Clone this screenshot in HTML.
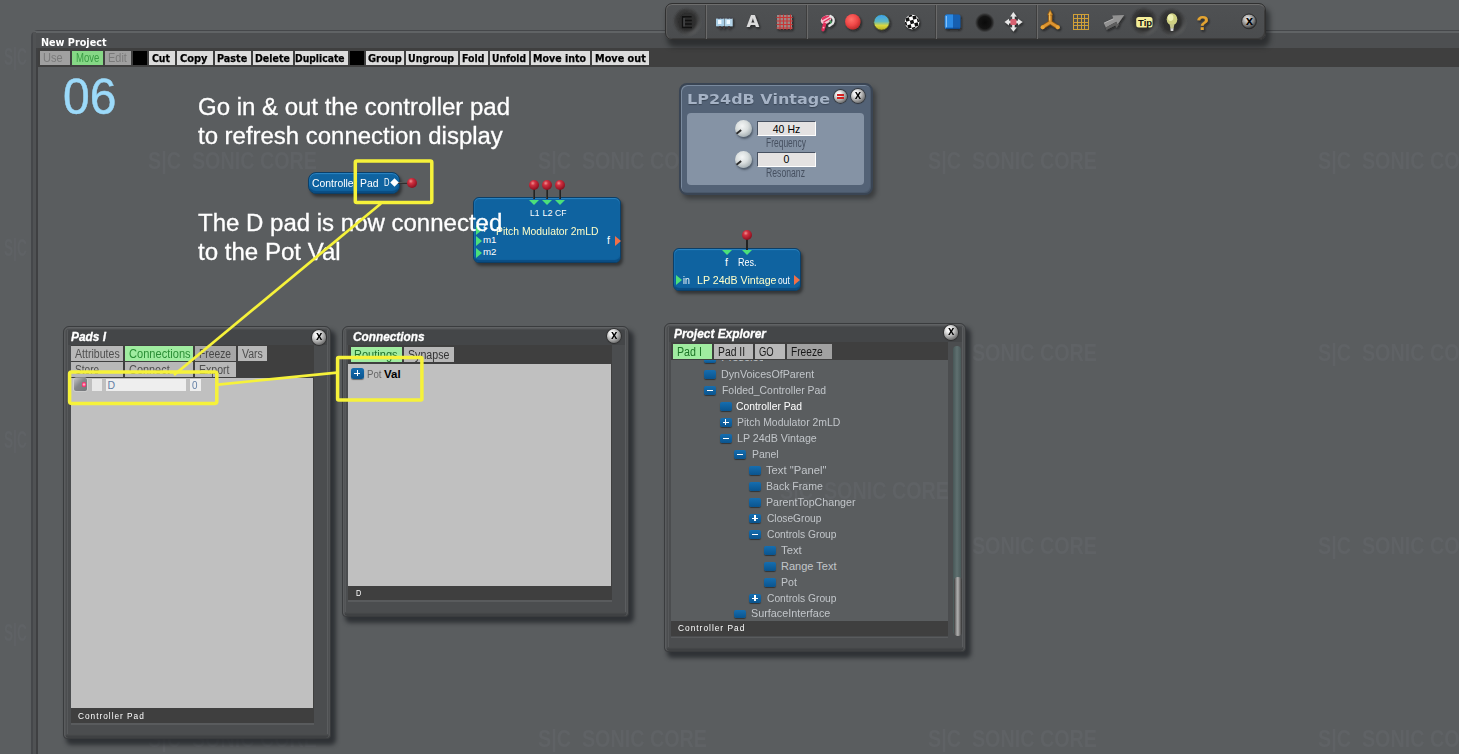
<!DOCTYPE html><html><head><meta charset="utf-8"><title>New Project</title><style>
*{margin:0;padding:0;box-sizing:border-box}
html,body{width:1459px;height:754px;overflow:hidden;background:#5b5e60;font-family:"Liberation Sans",sans-serif}
.a{position:absolute}
.t{position:absolute;white-space:nowrap;transform-origin:0 0;line-height:1}
.wm{position:absolute;white-space:nowrap;font:bold 23.5px/1 "Liberation Sans",sans-serif;color:#5f6265;transform-origin:0 0;transform:scaleX(.84)}
.wm s{text-decoration:none;display:inline-block;width:13px}
.btn{position:absolute;top:51px;height:14px;background:#dcdcdc}
.win{position:absolute;background:#4b4d4f;border:1.5px solid #3a3c3e;border-radius:6px 6px 4px 4px;box-shadow:inset 0 1px 0 #606264,inset 0 2px 0 #57595b,inset 1.5px 0 0 #5a5c5e,inset -1.5px 0 0 #535557,inset 0 -2.5px 1px #3f4143,4px 5px 4px 1px rgba(34,36,40,.75)}
.cb{position:absolute;width:14.4px;height:14.4px;border-radius:50%;background:radial-gradient(circle at 36% 32%,#fff 0,#ececec 20%,#b4b4b4 46%,#7c7c7c 70%,#3c3c3c 100%);box-shadow:0 0 .8px .7px #262626}
.cb b{position:absolute;left:0;top:0;width:14.4px;text-align:center;font:bold 9px/14.6px "DejaVu Sans",sans-serif;color:#000;transform:scaleX(.92)}
.tab{position:absolute;background:#b8b8b8;height:15px}
.tab.on{background:#a0eca0}
.mod{position:absolute;background:#0f63a0;border:1px solid #0b3f68;border-radius:6px;box-shadow:inset 0 1px 1px #2d86c4,inset 0 -2px 1px #0a4c82,inset 1px 0 0 #1670b0,2px 3px 3px rgba(20,22,24,.55)}
.ball{position:absolute;width:10px;height:10px;border-radius:50%;background:radial-gradient(circle at 38% 32%,#f09090 0,#d03040 25%,#a01828 60%,#58040c 100%)}
.ti{position:absolute;width:12px;height:8.8px;border-radius:2px;background:linear-gradient(#166eb0,#0a548e);box-shadow:0 1px 1px rgba(0,0,0,.45)}
.ti u,.ti s{position:absolute;background:#fff;left:3px;top:3.6px;width:6px;height:1.5px}.ti s{left:5.25px;top:1.4px;width:1.5px;height:6px}
.tu{position:absolute;width:0;height:0;border-left:5px solid transparent;border-right:5px solid transparent;border-top:5px solid #4be07a}
.tl{position:absolute;width:0;height:0;border-top:5px solid transparent;border-bottom:5px solid transparent;border-left:6px solid #4be07a}
</style></head><body>
<div class="wm" style="left:4px;top:46px;transform:scaleX(.58)">S|C<s></s>SONIC CORE</div>
<div class="wm" style="left:4px;top:237px;transform:scaleX(.58)">S|C<s></s>SONIC CORE</div>
<div class="wm" style="left:4px;top:429px;transform:scaleX(.58)">S|C<s></s>SONIC CORE</div>
<div class="wm" style="left:4px;top:622px;transform:scaleX(.58)">S|C<s></s>SONIC CORE</div>
<div class="a" style="left:31px;top:30px;width:1440px;height:740px;background:#5a5d5f;border-top-left-radius:7px;overflow:hidden"><div class="a" style="left:0;top:0;width:1440px;height:1px;background:#45474a"></div><div class="a" style="left:0;top:1px;width:1440px;height:2px;background:#606365"></div><div class="a" style="left:0;top:3px;width:1440px;height:15px;background:#4d4f51"></div><div class="a" style="left:0;top:18px;width:1440px;height:19px;background:#3f3f3f"></div><div class="a" style="left:0;top:0;width:2px;height:740px;background:#45474a"></div><div class="a" style="left:2px;top:2px;width:3px;height:740px;background:#505254"></div><div class="a" style="left:5px;top:18px;width:2px;height:740px;background:#3f4042"></div>
<div class="wm" style="left:116.80000000000001px;top:119.69999999999999px">S|C<s></s>SONIC CORE</div>
<div class="wm" style="left:506.79999999999995px;top:119.69999999999999px">S|C<s></s>SONIC CORE</div>
<div class="wm" style="left:896.8px;top:119.69999999999999px">S|C<s></s>SONIC CORE</div>
<div class="wm" style="left:1286.8px;top:119.69999999999999px">S|C<s></s>SONIC CORE</div>
<div class="wm" style="left:896.8px;top:312.2px">S|C<s></s>SONIC CORE</div>
<div class="wm" style="left:1286.8px;top:312.2px">S|C<s></s>SONIC CORE</div>
<div class="wm" style="left:896.8px;top:505px">S|C<s></s>SONIC CORE</div>
<div class="wm" style="left:1286.8px;top:505px">S|C<s></s>SONIC CORE</div>
<div class="wm" style="left:506.79999999999995px;top:697.9px">S|C<s></s>SONIC CORE</div>
<div class="wm" style="left:896.8px;top:697.9px">S|C<s></s>SONIC CORE</div>
<div class="wm" style="left:1286.8px;top:697.9px">S|C<s></s>SONIC CORE</div>
<div class="wm" style="left:116.80000000000001px;top:697.9px">S|C<s></s>SONIC CORE</div>
</div>
<div class="t" style="left:40.5px;top:36.69px;font:bold 11px 'DejaVu Sans',sans-serif;line-height:1;color:#fff;transform:scaleX(0.8766);">New Project</div>
<div class="btn" style="left:40px;width:30.0px;background:#a0a0a0;"></div>
<div class="t" style="left:43.4px;top:51.92px;font:12.5px 'Liberation Sans',sans-serif;line-height:1;color:#7a7a7a;transform:scaleX(0.8815);">Use</div>
<div class="btn" style="left:72px;width:31.0px;background:#86d886;"></div>
<div class="t" style="left:75.6px;top:51.92px;font:12.5px 'Liberation Sans',sans-serif;line-height:1;color:#3a9c44;transform:scaleX(0.7653);">Move</div>
<div class="btn" style="left:105px;width:26.0px;background:#a0a0a0;"></div>
<div class="t" style="left:108.4px;top:51.92px;font:12.5px 'Liberation Sans',sans-serif;line-height:1;color:#7a7a7a;transform:scaleX(0.8772);">Edit</div>
<div class="btn" style="left:133px;width:14.0px;background:#000;"></div>
<div class="btn" style="left:149px;width:25.8px;"></div>
<div class="t" style="left:151.7px;top:52.69px;font:bold 11px 'DejaVu Sans',sans-serif;line-height:1;color:#000;transform:scaleX(0.8502);-webkit-text-stroke:.25px #000;">Cut</div>
<div class="btn" style="left:177px;width:35.7px;"></div>
<div class="t" style="left:179.7px;top:52.69px;font:bold 11px 'DejaVu Sans',sans-serif;line-height:1;color:#000;transform:scaleX(0.8961);-webkit-text-stroke:.25px #000;">Copy</div>
<div class="btn" style="left:214.9px;width:36.0px;"></div>
<div class="t" style="left:216.8px;top:52.69px;font:bold 11px 'DejaVu Sans',sans-serif;line-height:1;color:#000;transform:scaleX(0.8762);-webkit-text-stroke:.25px #000;">Paste</div>
<div class="btn" style="left:252.7px;width:40.2px;"></div>
<div class="t" style="left:254.6px;top:52.69px;font:bold 11px 'DejaVu Sans',sans-serif;line-height:1;color:#000;transform:scaleX(0.8583);-webkit-text-stroke:.25px #000;">Delete</div>
<div class="btn" style="left:294.7px;width:53.3px;"></div>
<div class="t" style="left:295.4px;top:52.69px;font:bold 11px 'DejaVu Sans',sans-serif;line-height:1;color:#000;transform:scaleX(0.8400);-webkit-text-stroke:.25px #000;">Duplicate</div>
<div class="btn" style="left:350.3px;width:13.9px;background:#000;"></div>
<div class="btn" style="left:366px;width:37.6px;"></div>
<div class="t" style="left:367.5px;top:52.69px;font:bold 11px 'DejaVu Sans',sans-serif;line-height:1;color:#000;transform:scaleX(0.8961);-webkit-text-stroke:.25px #000;">Group</div>
<div class="btn" style="left:406px;width:51.7px;"></div>
<div class="t" style="left:407.8px;top:52.69px;font:bold 11px 'DejaVu Sans',sans-serif;line-height:1;color:#000;transform:scaleX(0.8626);-webkit-text-stroke:.25px #000;">Ungroup</div>
<div class="btn" style="left:460px;width:27.7px;"></div>
<div class="t" style="left:461.8px;top:52.69px;font:bold 11px 'DejaVu Sans',sans-serif;line-height:1;color:#000;transform:scaleX(0.8523);-webkit-text-stroke:.25px #000;">Fold</div>
<div class="btn" style="left:490px;width:38.7px;"></div>
<div class="t" style="left:492.1px;top:52.69px;font:bold 11px 'DejaVu Sans',sans-serif;line-height:1;color:#000;transform:scaleX(0.8340);-webkit-text-stroke:.25px #000;">Unfold</div>
<div class="btn" style="left:530.8px;width:58.9px;"></div>
<div class="t" style="left:533.1px;top:52.69px;font:bold 11px 'DejaVu Sans',sans-serif;line-height:1;color:#000;transform:scaleX(0.8633);-webkit-text-stroke:.25px #000;">Move into</div>
<div class="btn" style="left:591.6px;width:57.4px;"></div>
<div class="t" style="left:594.6px;top:52.69px;font:bold 11px 'DejaVu Sans',sans-serif;line-height:1;color:#000;transform:scaleX(0.8816);-webkit-text-stroke:.25px #000;">Move out</div>
<div class="t" style="left:63px;top:72.38px;font:50px 'Liberation Sans',sans-serif;line-height:1;color:#9cdafa;transform:scaleX(0.9600);-webkit-text-stroke:.5px #9cdafa;">06</div>
<div class="t" style="left:198px;top:96.33px;font:23px 'Liberation Sans',sans-serif;line-height:1;color:#fff;transform:scaleX(1.0428);-webkit-text-stroke:.3px #fff;">Go in &amp; out the controller pad</div>
<div class="t" style="left:198px;top:125.33px;font:23px 'Liberation Sans',sans-serif;line-height:1;color:#fff;transform:scaleX(1.0411);-webkit-text-stroke:.3px #fff;">to refresh connection display</div>
<div class="mod" style="left:308px;top:172.3px;width:92px;height:21.3px;border-radius:8px"></div>
<div class="t" style="left:312px;top:177.67px;font:11.5px 'Liberation Sans',sans-serif;line-height:1;color:#fff;transform:scaleX(0.9046);">Controller Pad</div>
<div class="t" style="left:384px;top:178.34px;font:10px 'Liberation Sans',sans-serif;line-height:1;color:#fff;transform:scaleX(0.7603);">D</div>
<div class="a" style="left:397px;top:181.7px;width:12px;height:2.5px;background:linear-gradient(#666,#1c1c1c)"></div>
<div class="a" style="left:391px;top:179.3px;width:7px;height:7px;background:#fff;transform:rotate(45deg) scale(.86)"></div>
<div class="ball" style="left:407px;top:178px"></div>
<div class="mod" style="left:473px;top:197px;width:148px;height:66px"></div>
<div class="a" style="left:533px;top:189px;width:2px;height:10px;background:linear-gradient(90deg,#444,#181818)"></div>
<div class="ball" style="left:529px;top:180.2px"></div>
<div class="tu" style="left:529px;top:200px"></div>
<div class="a" style="left:546px;top:189px;width:2px;height:10px;background:linear-gradient(90deg,#444,#181818)"></div>
<div class="ball" style="left:542px;top:180.2px"></div>
<div class="tu" style="left:542px;top:200px"></div>
<div class="a" style="left:559px;top:189px;width:2px;height:10px;background:linear-gradient(90deg,#444,#181818)"></div>
<div class="ball" style="left:555px;top:180.2px"></div>
<div class="tu" style="left:555px;top:200px"></div>
<div class="t" style="left:529.5px;top:208.98px;font:9px 'Liberation Sans',sans-serif;line-height:1;color:#fff;transform:scaleX(0.9485);">L1</div>
<div class="t" style="left:542.5px;top:208.98px;font:9px 'Liberation Sans',sans-serif;line-height:1;color:#fff;">L2</div>
<div class="t" style="left:555px;top:208.98px;font:9px 'Liberation Sans',sans-serif;line-height:1;color:#fff;transform:scaleX(0.9583);">CF</div>
<div class="t" style="left:495.5px;top:225.67px;font:11.5px 'Liberation Sans',sans-serif;line-height:1;color:#ffffc8;transform:scaleX(0.9009);">Pitch Modulator 2mLD</div>
<div class="tl" style="left:476px;top:225px"></div>
<div class="t" style="left:483px;top:224.39px;font:9.7px 'Liberation Sans',sans-serif;line-height:1;color:#fff;">f</div>
<div class="tl" style="left:476px;top:236px"></div>
<div class="t" style="left:483px;top:235.39px;font:9.7px 'Liberation Sans',sans-serif;line-height:1;color:#fff;">m1</div>
<div class="tl" style="left:476px;top:248px"></div>
<div class="t" style="left:483px;top:247.39px;font:9.7px 'Liberation Sans',sans-serif;line-height:1;color:#fff;">m2</div>
<div class="t" style="left:607px;top:234.61px;font:10.5px 'Liberation Sans',sans-serif;line-height:1;color:#fff;">f</div>
<div class="tl" style="left:614.5px;top:236px;border-left-color:#f07048"></div>
<div class="t" style="left:198px;top:211.53px;font:23px 'Liberation Sans',sans-serif;line-height:1;color:#fff;transform:scaleX(1.0439);-webkit-text-stroke:.3px #fff;">The D pad is now connected</div>
<div class="t" style="left:198px;top:240.53px;font:23px 'Liberation Sans',sans-serif;line-height:1;color:#fff;transform:scaleX(1.0463);-webkit-text-stroke:.3px #fff;">to the Pot Val</div>
<div class="a" style="left:678.6px;top:82.5px;width:194.6px;height:112px;background:#536276;border:2px solid #3a4554;border-radius:8px;box-shadow:inset 1px 1px 0 #7a8a9e,inset -1px -1px 0 #4a586a,3px 4px 4px rgba(30,32,34,.5)"></div>
<div class="a" style="left:687px;top:113px;width:177px;height:72px;background:#8593a5;border-radius:4px"></div>
<div class="t" style="left:686.8px;top:92.37px;font:bold 14.8px 'DejaVu Sans',sans-serif;line-height:1;color:#a6b3c6;transform:scaleX(1.0803);text-shadow:0 1px 1px #3a4656">LP24dB Vintage</div>
<div class="cb" style="left:833.5px;top:89.5px;width:13px;height:13px"><i class="a" style="left:3px;top:4px;width:7px;height:2px;background:#d42020"></i><i class="a" style="left:3px;top:7px;width:7px;height:2px;background:#d42020"></i></div>
<div class="cb" style="left:850.5px;top:89px;width:14px;height:14px"><b style="width:14px;line-height:14px">X</b></div>
<div class="a" style="left:734.5px;top:119.80000000000001px;width:17.5px;height:17.5px;border-radius:50%;background:radial-gradient(circle at 42% 36%,#f4f6f6 0,#dadfdf 40%,#a2acb0 78%,#5a6472 100%);box-shadow:1px 2px 2px rgba(30,40,50,.5)"></div>
<div class="a" style="left:736.3px;top:131.3px;width:5.5px;height:2.3px;background:#2c2c2c;transform:rotate(-40deg)"></div>
<div class="a" style="left:756.8px;top:121.00000000000001px;width:59.5px;height:15px;background:#e4e2e2;border-top:1px solid #465060;border-left:1px solid #465060;border-right:1px solid #fff;border-bottom:1px solid #fff"></div>
<div class="t" style="left:772.78125px;top:123.61px;font:10.5px 'Liberation Sans',sans-serif;line-height:1;color:#000;">40 Hz</div>
<div class="t" style="left:766px;top:136.72px;font:12.5px 'Liberation Sans',sans-serif;line-height:1;color:#465060;transform:scaleX(0.6772);">Frequency</div>
<div class="a" style="left:734.5px;top:150.5px;width:17.5px;height:17.5px;border-radius:50%;background:radial-gradient(circle at 42% 36%,#f4f6f6 0,#dadfdf 40%,#a2acb0 78%,#5a6472 100%);box-shadow:1px 2px 2px rgba(30,40,50,.5)"></div>
<div class="a" style="left:736.3px;top:162px;width:5.5px;height:2.3px;background:#2c2c2c;transform:rotate(-40deg)"></div>
<div class="a" style="left:756.8px;top:151.7px;width:59.5px;height:15px;background:#e4e2e2;border-top:1px solid #465060;border-left:1px solid #465060;border-right:1px solid #fff;border-bottom:1px solid #fff"></div>
<div class="t" style="left:783.578125px;top:154.31px;font:10.5px 'Liberation Sans',sans-serif;line-height:1;color:#000;">0</div>
<div class="t" style="left:766px;top:167.42px;font:12.5px 'Liberation Sans',sans-serif;line-height:1;color:#465060;transform:scaleX(0.6928);">Resonanz</div>
<div class="mod" style="left:673px;top:248px;width:128px;height:43px"></div>
<div class="a" style="left:746px;top:238px;width:2px;height:12px;background:#222"></div>
<div class="ball" style="left:742px;top:229.8px"></div>
<div class="tu" style="left:722px;top:250px"></div>
<div class="tu" style="left:742px;top:250px"></div>
<div class="t" style="left:725px;top:256.71px;font:10.5px 'Liberation Sans',sans-serif;line-height:1;color:#fff;">f</div>
<div class="t" style="left:737.5px;top:256.71px;font:10.5px 'Liberation Sans',sans-serif;line-height:1;color:#fff;transform:scaleX(0.8567);">Res.</div>
<div class="t" style="left:696.5px;top:274.87px;font:11.5px 'Liberation Sans',sans-serif;line-height:1;color:#ffffc8;transform:scaleX(0.9254);">LP 24dB Vintage</div>
<div class="t" style="left:682.5px;top:275.54px;font:10px 'Liberation Sans',sans-serif;line-height:1;color:#fff;transform:scaleX(0.8721);">in</div>
<div class="t" style="left:778px;top:275.54px;font:10px 'Liberation Sans',sans-serif;line-height:1;color:#fff;transform:scaleX(0.8485);">out</div>
<div class="tl" style="left:676px;top:275px"></div>
<div class="tl" style="left:794px;top:275px;border-left-color:#f07048"></div>
<div class="win" style="left:63.3px;top:325.7px;width:268px;height:413.4px"></div>
<div class="a" style="left:68.1px;top:329.5px;width:258.6px;height:15.0px;background:#444648;border-radius:2px 2px 0 0"></div>
<div class="a" style="left:327.1px;top:329.7px;width:1.2px;height:404.4px;background:#5b5d5f"></div>
<div class="a" style="left:66.7px;top:329.7px;width:1.2px;height:404.4px;background:#57595b"></div>
<div class="t" style="left:71px;top:330.82px;font:italic bold 12.5px 'Liberation Sans',sans-serif;line-height:1;color:#fff;transform:scaleX(0.9504);-webkit-text-stroke:.3px #fff;">Pads I</div>
<div class="cb" style="left:311.5px;top:330.4px"><b>X</b></div>
<div class="a" style="left:70.5px;top:344.5px;width:243px;height:378.6px;background:#3f3f3f"></div>
<div class="a" style="left:70.5px;top:377.7px;width:242.3px;height:330px;background:#c0c0c0"></div>
<div class="tab" style="left:71px;top:346px;width:51.6px"></div>
<div class="t" style="left:74.9px;top:348.12px;font:12.5px 'Liberation Sans',sans-serif;line-height:1;color:#4e4e4e;transform:scaleX(0.8464);">Attributes</div>
<div class="tab on" style="left:125px;top:346px;width:68.2px"></div>
<div class="t" style="left:128.6px;top:348.12px;font:12.5px 'Liberation Sans',sans-serif;line-height:1;color:#2b8f36;transform:scaleX(0.8863);">Connections</div>
<div class="tab" style="left:195.2px;top:346px;width:40.8px"></div>
<div class="t" style="left:198.5px;top:348.12px;font:12.5px 'Liberation Sans',sans-serif;line-height:1;color:#4e4e4e;transform:scaleX(0.8225);">Freeze</div>
<div class="a" style="left:195.2px;top:346px;width:40.8px;height:15px;background:rgba(0,0,0,.09)"></div>
<div class="tab" style="left:238px;top:346px;width:28.7px"></div>
<div class="t" style="left:241.9px;top:348.12px;font:12.5px 'Liberation Sans',sans-serif;line-height:1;color:#4e4e4e;transform:scaleX(0.8434);">Vars</div>
<div class="tab" style="left:71px;top:362px;width:51.6px"></div>
<div class="t" style="left:74.9px;top:364.02px;font:12.5px 'Liberation Sans',sans-serif;line-height:1;color:#4e4e4e;transform:scaleX(0.8063);">Store</div>
<div class="tab" style="left:125px;top:362px;width:68.2px"></div>
<div class="t" style="left:128.6px;top:364.02px;font:12.5px 'Liberation Sans',sans-serif;line-height:1;color:#4e4e4e;transform:scaleX(0.8741);">Connect</div>
<div class="tab" style="left:195.2px;top:362px;width:40.8px"></div>
<div class="t" style="left:198.5px;top:364.02px;font:12.5px 'Liberation Sans',sans-serif;line-height:1;color:#4e4e4e;transform:scaleX(0.8439);">Export</div>
<div class="a" style="left:73.5px;top:378.4px;width:13.2px;height:12.2px;background:linear-gradient(135deg,#c4c4c6,#85878a 45%,#74767a);border-radius:2px;box-shadow:0 0 0 .6px #d8d8d8"></div>
<div class="a" style="left:82px;top:382px;width:4.3px;height:4.8px;background:radial-gradient(circle,#ffd0e0 0,#ff3a78 55%,#e02860 100%);border-radius:1.5px"></div>
<div class="a" style="left:92px;top:378.5px;width:10px;height:12.5px;background:#e8e8e8"></div>
<div class="a" style="left:105.7px;top:378.5px;width:80.5px;height:12.5px;background:#eeeeee"></div>
<div class="a" style="left:189.8px;top:378.5px;width:11.2px;height:12.5px;background:#eeeeee"></div>
<div class="t" style="left:107.5px;top:380.11px;font:10.5px 'Liberation Sans',sans-serif;line-height:1;color:#6480a6;">D</div>
<div class="t" style="left:191.5px;top:380.11px;font:10.5px 'Liberation Sans',sans-serif;line-height:1;color:#6480a6;transform:scaleX(0.9412);">0</div>
<div class="t" style="left:77.6px;top:711.73px;font:9.3px 'Liberation Sans',sans-serif;line-height:1;color:#fff;letter-spacing:1.1px;transform:scaleX(0.8927);">Controller Pad</div>
<div class="a" style="left:70.5px;top:723.3px;width:243px;height:1.6px;background:#595b5d"></div>
<div class="win" style="left:341.8px;top:325.7px;width:287.6px;height:290.9px"></div>
<div class="a" style="left:346.6px;top:329.5px;width:278.2px;height:15.9px;background:#444648;border-radius:2px 2px 0 0"></div>
<div class="a" style="left:625.2px;top:329.7px;width:1.2px;height:281.9px;background:#5b5d5f"></div>
<div class="a" style="left:345.2px;top:329.7px;width:1.2px;height:281.9px;background:#57595b"></div>
<div class="t" style="left:352.5px;top:331.02px;font:italic bold 12.5px 'Liberation Sans',sans-serif;line-height:1;color:#fff;transform:scaleX(0.9445);-webkit-text-stroke:.3px #fff;">Connections</div>
<div class="cb" style="left:607.1px;top:328.5px"><b>X</b></div>
<div class="a" style="left:348px;top:345.4px;width:264px;height:254.6px;background:#3f3f3f"></div>
<div class="a" style="left:348px;top:364px;width:262.8px;height:221.5px;background:#c0c0c0"></div>
<div class="tab on" style="left:350.6px;top:347px;width:51.6px"></div>
<div class="t" style="left:354.4px;top:349.02px;font:12.5px 'Liberation Sans',sans-serif;line-height:1;color:#1f7029;transform:scaleX(0.8836);">Routings</div>
<div class="tab" style="left:404.4px;top:347px;width:49.3px"></div>
<div class="t" style="left:407.6px;top:349.02px;font:12.5px 'Liberation Sans',sans-serif;line-height:1;color:#333;transform:scaleX(0.8509);">Synapse</div>
<div class="ti" style="left:351.1px;top:368.1px;width:12.8px;height:10.8px;border-radius:2.5px"><u style="left:3.4px;top:4.6px"></u><s style="left:5.65px;top:2.4px"></s></div>
<div class="t" style="left:366.5px;top:369.17px;font:11.5px 'Liberation Sans',sans-serif;line-height:1;color:#666;transform:scaleX(0.8398);">Pot</div>
<div class="t" style="left:384px;top:369.17px;font:bold 11.5px 'Liberation Sans',sans-serif;line-height:1;color:#000;">Val</div>
<div class="t" style="left:356.2px;top:589.13px;font:9.3px 'Liberation Sans',sans-serif;line-height:1;color:#fff;transform:scaleX(0.7888);">D</div>
<div class="a" style="left:348px;top:600.3px;width:264px;height:1.6px;background:#595b5d"></div>
<div class="win" style="left:664.3px;top:322.7px;width:302px;height:329.7px"></div>
<div class="a" style="left:669.1px;top:326.5px;width:292.6px;height:15.5px;background:#444648;border-radius:2px 2px 0 0"></div>
<div class="a" style="left:962.1px;top:326.7px;width:1.2px;height:320.7px;background:#5b5d5f"></div>
<div class="a" style="left:667.7px;top:326.7px;width:1.2px;height:320.7px;background:#57595b"></div>
<div class="t" style="left:674px;top:327.62px;font:italic bold 12.5px 'Liberation Sans',sans-serif;line-height:1;color:#fff;transform:scaleX(0.9526);-webkit-text-stroke:.3px #fff;">Project Explorer</div>
<div class="cb" style="left:943.7px;top:325.2px"><b>X</b></div>
<div class="a" style="left:671.3px;top:342px;width:277px;height:293.5px;background:#3f3f3f"></div>
<div class="a" style="left:671.3px;top:360px;width:277px;height:261.2px;background:#5a5d5f;overflow:hidden">
<div class="wm" style="left:109.2px;top:119.7px">S|C<s></s>SONIC CORE</div>
</div>
<div class="ti" style="left:704.3px;top:360px;height:2.5px;border-radius:0 0 2px 2px"></div>
<div class="a" style="left:721.3px;top:360px;width:42px;height:2.5px;overflow:hidden"><div class="t" style="left:0;top:-8px;font-size:11px;color:#c2c6ca">Preselect</div></div>
<div class="ti" style="left:704.3px;top:370.0px"></div>
<div class="t" style="left:720.9px;top:368.69px;font:11px 'Liberation Sans',sans-serif;line-height:1;color:#c2c6ca;transform:scaleX(0.9708);">DynVoicesOfParent</div>
<div class="ti" style="left:704.3px;top:386.0px"><u></u></div>
<div class="t" style="left:722.1px;top:384.69px;font:11px 'Liberation Sans',sans-serif;line-height:1;color:#c2c6ca;transform:scaleX(0.9457);">Folded_Controller Pad</div>
<div class="ti" style="left:719.5px;top:402.0px"></div>
<div class="t" style="left:736.1px;top:400.69px;font:11px 'Liberation Sans',sans-serif;line-height:1;color:#fff;transform:scaleX(0.9399);">Controller Pad</div>
<div class="ti" style="left:719.5px;top:418.0px"><u></u><s></s></div>
<div class="t" style="left:737.3000000000001px;top:416.69px;font:11px 'Liberation Sans',sans-serif;line-height:1;color:#c2c6ca;transform:scaleX(0.9501);">Pitch Modulator 2mLD</div>
<div class="ti" style="left:719.5px;top:434.0px"><u></u></div>
<div class="t" style="left:737.3000000000001px;top:432.69px;font:11px 'Liberation Sans',sans-serif;line-height:1;color:#c2c6ca;transform:scaleX(0.9711);">LP 24dB Vintage</div>
<div class="ti" style="left:734.3px;top:450.0px"><u></u></div>
<div class="t" style="left:752.1px;top:448.69px;font:11px 'Liberation Sans',sans-serif;line-height:1;color:#c2c6ca;transform:scaleX(0.9488);">Panel</div>
<div class="ti" style="left:749.2px;top:466.0px"></div>
<div class="t" style="left:765.8000000000001px;top:464.69px;font:11px 'Liberation Sans',sans-serif;line-height:1;color:#c2c6ca;transform:scaleX(1.0205);">Text &quot;Panel&quot;</div>
<div class="ti" style="left:749.2px;top:482.0px"></div>
<div class="t" style="left:765.8000000000001px;top:480.69px;font:11px 'Liberation Sans',sans-serif;line-height:1;color:#c2c6ca;transform:scaleX(0.9579);">Back Frame</div>
<div class="ti" style="left:749.2px;top:498.0px"></div>
<div class="t" style="left:765.8000000000001px;top:496.69px;font:11px 'Liberation Sans',sans-serif;line-height:1;color:#c2c6ca;transform:scaleX(0.9692);">ParentTopChanger</div>
<div class="ti" style="left:749.2px;top:514.0px"><u></u><s></s></div>
<div class="t" style="left:767.0000000000001px;top:512.69px;font:11px 'Liberation Sans',sans-serif;line-height:1;color:#c2c6ca;transform:scaleX(0.9267);">CloseGroup</div>
<div class="ti" style="left:749.2px;top:530.0px"><u></u></div>
<div class="t" style="left:767.0000000000001px;top:528.69px;font:11px 'Liberation Sans',sans-serif;line-height:1;color:#c2c6ca;transform:scaleX(0.9317);">Controls Group</div>
<div class="ti" style="left:764.4px;top:546.0px"></div>
<div class="t" style="left:781.0px;top:544.69px;font:11px 'Liberation Sans',sans-serif;line-height:1;color:#c2c6ca;transform:scaleX(1.0254);">Text</div>
<div class="ti" style="left:764.4px;top:562.0px"></div>
<div class="t" style="left:781.0px;top:560.69px;font:11px 'Liberation Sans',sans-serif;line-height:1;color:#c2c6ca;">Range Text</div>
<div class="ti" style="left:764.4px;top:578.0px"></div>
<div class="t" style="left:781.0px;top:576.69px;font:11px 'Liberation Sans',sans-serif;line-height:1;color:#c2c6ca;transform:scaleX(0.9627);">Pot</div>
<div class="ti" style="left:749.2px;top:594.0px"><u></u><s></s></div>
<div class="t" style="left:767.0000000000001px;top:592.69px;font:11px 'Liberation Sans',sans-serif;line-height:1;color:#c2c6ca;transform:scaleX(0.9317);">Controls Group</div>
<div class="ti" style="left:734.3px;top:609.7px"></div>
<div class="t" style="left:750.9px;top:608.39px;font:11px 'Liberation Sans',sans-serif;line-height:1;color:#c2c6ca;transform:scaleX(0.9824);">SurfaceInterface</div>
<div class="tab on" style="left:673px;top:344px;width:39.0px"></div>
<div class="t" style="left:676.5px;top:346.12px;font:12.5px 'Liberation Sans',sans-serif;line-height:1;color:#1c7426;transform:scaleX(0.8531);">Pad I</div>
<div class="tab" style="left:714.3px;top:344px;width:38.4px"></div>
<div class="t" style="left:717.7px;top:346.12px;font:12.5px 'Liberation Sans',sans-serif;line-height:1;color:#1c1c1c;transform:scaleX(0.8295);">Pad II</div>
<div class="tab" style="left:755.2px;top:344px;width:29.8px"></div>
<div class="t" style="left:758.6px;top:346.12px;font:12.5px 'Liberation Sans',sans-serif;line-height:1;color:#1c1c1c;transform:scaleX(0.7557);">GO</div>
<div class="tab" style="left:787.3px;top:344px;width:44.7px"></div>
<div class="t" style="left:790.7px;top:346.12px;font:12.5px 'Liberation Sans',sans-serif;line-height:1;color:#1c1c1c;transform:scaleX(0.8148);">Freeze</div>
<div class="a" style="left:787.3px;top:344px;width:44.7px;height:15px;background:rgba(0,0,0,.12)"></div>
<div class="t" style="left:678.4px;top:624.33px;font:9.3px 'Liberation Sans',sans-serif;line-height:1;color:#fff;letter-spacing:1.1px;transform:scaleX(0.8994);">Controller Pad</div>
<div class="a" style="left:671.3px;top:636.6px;width:277px;height:1.6px;background:#595b5d"></div>
<div class="a" style="left:953px;top:346px;width:8px;height:289px;background:linear-gradient(90deg,#485858,#5f7070 50%,#4a5a5a);border-radius:4px"></div>
<div class="a" style="left:953.5px;top:577px;width:8.3px;height:58.5px;background:linear-gradient(90deg,#3c3c3c,#8c8c8c 28%,#b0b0b0 48%,#707070 74%,#343434);border-radius:4px"></div>
<svg class="a" style="left:0;top:0" width="1459" height="754" fill="none" stroke="#f6f23a" stroke-width="3.5"><rect x="355.3" y="161" width="76.5" height="41.4" rx="1.5"/><rect x="69.6" y="372" width="147.2" height="31.4" rx="1.8"/><rect x="337.6" y="357.4" width="84.3" height="42.7" rx="1"/><path d="M381 203.5 L174 375" stroke-width="2.7"/><path d="M218 384.6 L337 372.6" stroke-width="2.7"/></svg>
<div class="a" style="left:665px;top:3.3px;width:600.5px;height:36.5px;background:linear-gradient(#4f5153,#4a4c4e);border:1px solid #303030;border-radius:7px;box-shadow:inset 0 1px 0 #6e6e6e,inset 1px 0 0 #5c5c5c,inset -1px -1px 0 #3c3c3c,3px 6px 5px 1px rgba(25,26,28,.6)"></div>
<div class="a" style="left:706.3px;top:5px;width:1px;height:34px;background:#6a6a6a"></div><div class="a" style="left:705.3px;top:5px;width:1px;height:34px;background:#3e3e3e"></div>
<div class="a" style="left:806.5px;top:5px;width:1px;height:34px;background:#6a6a6a"></div><div class="a" style="left:805.5px;top:5px;width:1px;height:34px;background:#3e3e3e"></div>
<div class="a" style="left:935.8px;top:5px;width:1px;height:34px;background:#6a6a6a"></div><div class="a" style="left:934.8px;top:5px;width:1px;height:34px;background:#3e3e3e"></div>
<div class="a" style="left:1037px;top:5px;width:1px;height:34px;background:#6a6a6a"></div><div class="a" style="left:1036px;top:5px;width:1px;height:34px;background:#3e3e3e"></div>
<svg class="a" style="left:665px;top:0" width="602" height="44" viewBox="665 0 602 44"><defs>
<radialGradient id="dk"><stop offset="0" stop-color="#2a2a2a" stop-opacity="1"/><stop offset=".6" stop-color="#2c2c2c" stop-opacity=".9"/><stop offset=".82" stop-color="#333" stop-opacity=".55"/><stop offset="1" stop-color="#444" stop-opacity="0"/></radialGradient>
<radialGradient id="rd" cx=".4" cy=".35" r=".7"><stop offset="0" stop-color="#ff7068"/><stop offset=".55" stop-color="#f04848"/><stop offset="1" stop-color="#b82828"/></radialGradient>
<linearGradient id="by" x1="0" y1="0" x2="0" y2="1"><stop offset="0" stop-color="#3aa0f0"/><stop offset=".45" stop-color="#60b8c0"/><stop offset=".7" stop-color="#d8d840"/><stop offset="1" stop-color="#b8b020"/></linearGradient>
<radialGradient id="bk"><stop offset="0" stop-color="#0a0a0a"/><stop offset=".62" stop-color="#141414"/><stop offset=".8" stop-color="#222" stop-opacity=".75"/><stop offset="1" stop-color="#333" stop-opacity="0"/></radialGradient>
<radialGradient id="cx" cx=".4" cy=".34" r=".68"><stop offset="0" stop-color="#ececec"/><stop offset=".3" stop-color="#c0c0c0"/><stop offset=".62" stop-color="#868686"/><stop offset="1" stop-color="#2c2c2c"/></radialGradient>
<linearGradient id="rim" x1="0" y1="0" x2="1" y2="1"><stop offset="0" stop-color="#1e1e20" stop-opacity=".55"/><stop offset=".5" stop-color="#444" stop-opacity="0"/><stop offset="1" stop-color="#8a8c8e" stop-opacity=".6"/></linearGradient><filter id="bl" x="-30%" y="-30%" width="160%" height="160%"><feGaussianBlur stdDeviation="1.1"/></filter><clipPath id="ck"><circle cx="912" cy="22" r="7.2"/></clipPath>
<filter id="sh" x="-30%" y="-30%" width="170%" height="170%"><feDropShadow dx="1.2" dy="1.5" stdDeviation="1" flood-color="#111" flood-opacity=".7"/></filter>
</defs><circle cx="687.3" cy="21.8" r="14.5" fill="url(#dk)"/><circle cx="687.3" cy="21.8" r="11.5" fill="none" stroke="url(#rim)" stroke-width="3.5" filter="url(#bl)"/><path d="M682.6 16.2v11.2h9.4 M682 16.8h9.6 M685 20.6h6.8 M685 24h6.8" stroke="#101010" stroke-width="1.5" fill="none"/><path d="M684 18v8.5" stroke="#606264" stroke-width=".8"/><g filter="url(#sh)"><rect x="716" y="18.6" width="8" height="7.6" fill="#a8cce4"/><rect x="724.6" y="18.6" width="8" height="7.6" fill="#b4d4e8"/><rect x="718" y="20" width="3.4" height="4" fill="#eef8ff"/><rect x="726.6" y="20" width="3.4" height="4" fill="#eef8ff"/><path d="M719 17v2M722 17v2M728 17v2M731 17v2" stroke="#445" stroke-width="1"/><path d="M720 26v3M724 26v3M729 26v3" stroke="#4a3a3a" stroke-width="1.3"/></g><text x="746.5" y="27" font-family="DejaVu Sans,sans-serif" font-weight="bold" font-size="16.5" fill="#dcdcdc" filter="url(#sh)">A</text><g filter="url(#sh)"><rect x="777" y="15" width="15" height="14" fill="#9a8a88"/><path d="M780 14.5v15M783.5 14.5v15M787 14.5v15M790.5 14.5v15M776.5 17.5h16M776.5 21h16M776.5 24.5h16M776.5 28h16" stroke="#c83434" stroke-width="1.1"/></g><g filter="url(#sh)"><ellipse cx="826" cy="19.6" rx="5.6" ry="3.9" transform="rotate(-28 826 19.6)" fill="#f2c0cc"/><path d="M822.5 19.5l6-3.4 M823.8 22l6.2-3.6 M825.8 16.2l-3.6 2" stroke="#e0305c" stroke-width="1.3" stroke-linecap="round"/><path d="M830.5 16c3 1.2 4.2 4.4 2.4 7.2l-3.6 2.6" stroke="#e6e6e6" stroke-width="2.2" fill="none" stroke-linecap="round"/><path d="M829.4 20.6c1.6 .4 2 1.8 1 3" stroke="#48a060" stroke-width="1.3" fill="none"/><path d="M824.6 24.2l-1.6 5.4" stroke="#e02c58" stroke-width="3.2" stroke-linecap="round"/><circle cx="823.6" cy="27.6" r=".9" fill="#ffb0c0"/></g><circle cx="852.8" cy="21.7" r="7.7" fill="url(#rd)" filter="url(#sh)"/><circle cx="881.6" cy="22.3" r="7.8" fill="url(#by)" stroke="#4c5028" stroke-width=".7" filter="url(#sh)"/><circle cx="912" cy="22" r="7.2" fill="#fff" filter="url(#sh)"/><g clip-path="url(#ck)" fill="#111"><rect x="903.0" y="13.0" width="3.6" height="3.6" transform="rotate(-15 912 22)"/><rect x="903.0" y="20.2" width="3.6" height="3.6" transform="rotate(-15 912 22)"/><rect x="903.0" y="27.4" width="3.6" height="3.6" transform="rotate(-15 912 22)"/><rect x="906.6" y="16.6" width="3.6" height="3.6" transform="rotate(-15 912 22)"/><rect x="906.6" y="23.8" width="3.6" height="3.6" transform="rotate(-15 912 22)"/><rect x="910.2" y="13.0" width="3.6" height="3.6" transform="rotate(-15 912 22)"/><rect x="910.2" y="20.2" width="3.6" height="3.6" transform="rotate(-15 912 22)"/><rect x="910.2" y="27.4" width="3.6" height="3.6" transform="rotate(-15 912 22)"/><rect x="913.8" y="16.6" width="3.6" height="3.6" transform="rotate(-15 912 22)"/><rect x="913.8" y="23.8" width="3.6" height="3.6" transform="rotate(-15 912 22)"/><rect x="917.4" y="13.0" width="3.6" height="3.6" transform="rotate(-15 912 22)"/><rect x="917.4" y="20.2" width="3.6" height="3.6" transform="rotate(-15 912 22)"/><rect x="917.4" y="27.4" width="3.6" height="3.6" transform="rotate(-15 912 22)"/></g><g filter="url(#sh)"><rect x="944.8" y="14.5" width="15.6" height="14.5" rx="2" fill="#145eb0"/><path d="M946.8 14.5h6.2v14.5h-6.2a2 2 0 0 1-2-2v-10.5a2 2 0 0 1 2-2z" fill="#2c88e2"/><path d="M946.3 16v11.5" stroke="#9cd0ff" stroke-width="1"/><path d="M946 28.3h13.5" stroke="#0e4a90" stroke-width="1.2"/></g><circle cx="984.8" cy="22.6" r="10" fill="url(#bk)"/><g filter="url(#sh)"><path d="M1013.4 12l3.2 4.5h-2v3h-2.4v-3h-2z M1013.4 31.5l3.2-4h-2v-3h-2.4v3h-2z M1004.5 22l4.5-3.2v2h3v2.4h-3v2z M1022.5 22l-4.5-3.2v2h-3v2.4h3v2z" fill="#e8e8e8"/><rect x="1010.4" y="19" width="6" height="6" rx="1.5" fill="#d86070"/></g><g filter="url(#sh)" stroke-linecap="round" fill="none"><path d="M1050.2 22.4v-8M1050.2 22.4l-7.4 4.6M1050.2 22.4l7.4 4.6" stroke="#8a5614" stroke-width="4.2"/><path d="M1050.2 22.4v-8M1050.2 22.4l-7.4 4.6M1050.2 22.4l7.4 4.6" stroke="#dc9430" stroke-width="2.8"/><path d="M1050.2 10l2.4 5h-4.8z" fill="#e8a438" stroke="#8a5614" stroke-width=".6"/><circle cx="1042.6" cy="27.2" r="2" fill="#e8a438"/><circle cx="1057.8" cy="27.2" r="2" fill="#e8a438"/><path d="M1049.6 20v-6" stroke="#f4c870" stroke-width=".8"/></g><path d="M1073.5 13.5v16M1072.5 14.5h16.5M1077.5 13.5v16M1072.5 18.5h16.5M1081.5 13.5v16M1072.5 22.5h16.5M1084.5 13.5v16M1072.5 25.5h16.5M1088.5 13.5v16M1072.5 29.5h16.5" stroke="#d0a038" stroke-width="1" fill="none" shape-rendering="crispEdges"/><g filter="url(#sh)"><path d="M1103.8 23l9.6-4.4-1.2-3 12 -0.6-6.6 9.6-1.3-2.8-10.4 5.6z" fill="#929292"/><path d="M1105.9 27.4l10.4-5.6 1.3 2.8 1.2-1.6 0 1.8-2.3 3.2-1.2-2.6-9 4.6z" fill="#5e5e5e"/><path d="M1104.2 23l9.4-4.2" stroke="#b8b8b8" stroke-width=".9"/></g><circle cx="1144.5" cy="21.6" r="14.5" fill="url(#dk)"/><circle cx="1144.5" cy="21.6" r="11.5" fill="none" stroke="url(#rim)" stroke-width="3.5" filter="url(#bl)"/><rect x="1136.2" y="17" width="16.3" height="10.5" rx="2.5" fill="#f4ee9a"/><text x="1138" y="25.6" font-family="Liberation Sans,sans-serif" font-weight="bold" font-size="9.5" fill="#111">Tip</text><circle cx="1172.3" cy="22.4" r="14.5" fill="url(#dk)"/><circle cx="1172.3" cy="22.4" r="11.5" fill="none" stroke="url(#rim)" stroke-width="3.5" filter="url(#bl)"/><ellipse cx="1172" cy="19.3" rx="5.3" ry="6.1" fill="#cfd082"/><ellipse cx="1170.6" cy="17.6" rx="2.8" ry="3.4" fill="#eef0b4"/><path d="M1169.6 24.3h4.8l-.9 4.2h-3z" fill="#c4c48a"/><path d="M1170.4 28.3h3.2l-.3 2.6h-2.6z" fill="#d8d8d8"/><text x="1196.2" y="30.3" font-family="Liberation Sans,sans-serif" font-weight="bold" font-size="21" fill="#e4a430" filter="url(#sh)">?</text><circle cx="1249" cy="21.4" r="7.4" fill="url(#cx)" stroke="#2a2a2a" stroke-width="1"/><text x="1245.7" y="24.9" font-family="DejaVu Sans,sans-serif" font-weight="bold" font-size="9.5" fill="#000">X</text></svg>
</body></html>
